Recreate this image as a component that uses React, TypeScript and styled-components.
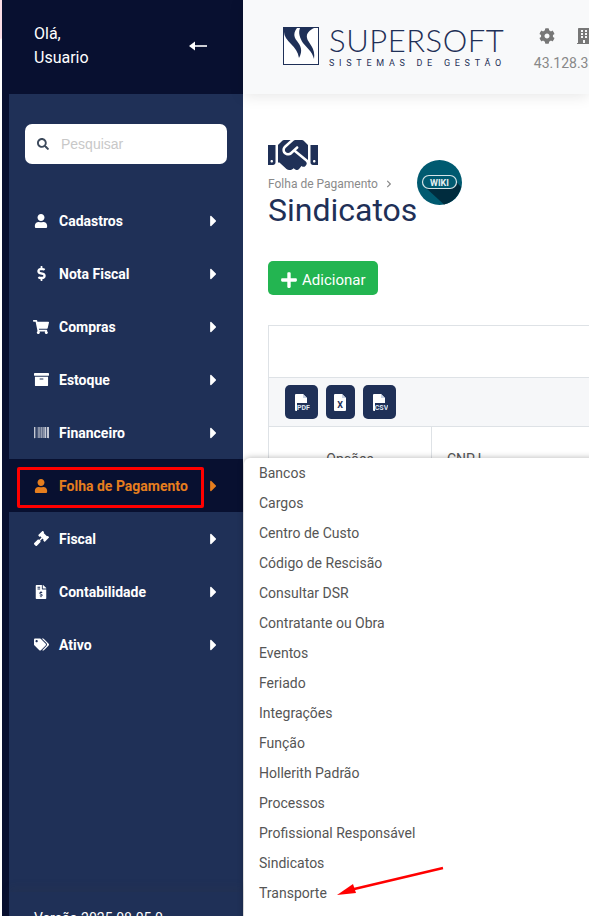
import React from 'react'
import styled, { createGlobalStyle } from 'styled-components'
import {
  FaArchive, FaBarcode, FaBuilding, FaCaretRight, FaChevronRight, FaCog, FaDollarSign,
  FaFileInvoiceDollar, FaGavel, FaHandshake, FaPlus, FaSearch,
  FaShoppingCart, FaTags, FaUser,
} from 'react-icons/fa'

const NAVY = '#1f3057'
const DARK = '#081030'
const ORANGE = '#e67e1e'

const GlobalStyle = createGlobalStyle`
  html, body {
    margin: 0;
    padding: 0;
    background: #ffffff;
    font-family: Roboto, "Liberation Sans", sans-serif;
  }
  * {
    box-sizing: border-box;
  }
`

const Page = styled.div`
  position: relative;
  display: flex;
  width: 589px;
  height: 916px;
  overflow: hidden;
`

const Edge = styled.div`
  flex: none;
  width: 2px;
  background: linear-gradient(#fbdde6 0, #fbdde6 38px, #ffffff 40px);
`

const Sidebar = styled.aside`
  flex: none;
  display: flex;
  flex-direction: column;
  width: 241px;
  height: 916px;
  background: ${DARK};
`

const UserBar = styled.div`
  flex: none;
  display: flex;
  align-items: center;
  justify-content: space-between;
  height: 94px;
  padding: 0 36px 2px 32px;
  color: #ffffff;
  font-size: 16px;
  line-height: 24px;
`

const Panel = styled.div`
  flex: 1;
  display: flex;
  flex-direction: column;
  margin-left: 7px;
  background: ${NAVY};
`

const SearchBox = styled.label`
  display: flex;
  align-items: center;
  gap: 12px;
  height: 40px;
  margin: 30px 16px 30px;
  padding-left: 12px;
  border-radius: 7px;
  background: #ffffff;
  color: #3d4a5c;
`

const SearchInput = styled.input`
  width: 130px;
  border: 0;
  outline: 0;
  padding: 0;
  background: transparent;
  font-family: "Liberation Sans", sans-serif;
  font-size: 14px;

  &::placeholder {
    color: #c8c8c8;
    opacity: 1;
  }
`

const Nav = styled.nav`
  flex: 1;
`

const NavRow = styled.div<{ $active?: boolean }>`
  position: relative;
  display: flex;
  align-items: center;
  height: 53px;
  padding-left: 24px;
  background: ${p => (p.$active ? DARK : 'transparent')};
  color: ${p => (p.$active ? ORANGE : '#ffffff')};
  font-size: 14px;
  font-weight: 700;
`

const NavIcon = styled.span`
  flex: none;
  display: flex;
  justify-content: center;
  width: 16px;
  margin-right: 10px;
`

const NavLabel = styled.span`
  flex: 1;
`

const NavCaret = styled.span`
  flex: none;
  display: flex;
  width: 9px;
  margin-right: 25px;
`

const Highlight = styled.span`
  position: absolute;
  left: 8px;
  top: 8px;
  width: 187px;
  height: 41px;
  border: 3px solid #ff0000;
  border-radius: 2px;
`

const Version = styled.div`
  flex: none;
  height: 24px;
  padding: 18px 0 0 25px;
  overflow: hidden;
  color: #ffffff;
  font-size: 14px;
  line-height: 16px;
  white-space: nowrap;
  box-shadow: 0 -5px 8px rgba(60, 60, 60, 0.12);
`

const Main = styled.main`
  flex: 1;
  min-width: 0;
  display: flex;
  flex-direction: column;
`

const TopBar = styled.header`
  flex: none;
  display: flex;
  align-items: flex-start;
  height: 94px;
  padding: 27px 0 0 40px;
  background: #f8f9fa;
  box-shadow: 0 2px 14px rgba(0, 0, 0, 0.1);
  white-space: nowrap;
`

const Logo = styled.div`
  display: flex;
  gap: 10px;
`

const Brand = styled.div`
  display: flex;
  flex-direction: column;
  color: ${NAVY};
`

const BrandName = styled.span`
  font-family: Lato, sans-serif;
  font-size: 31px;
  font-weight: 300;
  line-height: 27px;
  letter-spacing: 0.55px;
`

const BrandTag = styled.span`
  margin-top: 4px;
  font-size: 9px;
  line-height: 10px;
  letter-spacing: 4.72px;
`

const Tools = styled.div`
  display: flex;
  flex-direction: column;
  margin: -2px 0 0 28px;
  color: #888888;
`

const ToolIcons = styled.div`
  display: flex;
  gap: 21px;
  height: 21px;
  padding-left: 5px;
  align-items: center;
  color: #777777;
`

const HostText = styled.span`
  margin-top: 9px;
  font-size: 14px;
  line-height: 16px;
`

const Content = styled.section`
  flex: 1;
  padding: 46px 0 0 25px;
`

const PageIcon = styled.div`
  display: flex;
  height: 30px;
  overflow: hidden;
  align-items: center;
  color: ${NAVY};
`

const TitleRow = styled.div`
  display: flex;
  align-items: flex-start;
  margin-top: -10px;
`

const TitleBlock = styled.div`
  padding-top: 18px;
`

const Crumb = styled.div`
  display: flex;
  align-items: center;
  gap: 7px;
  color: #8a8a8a;
  font-size: 12px;
  line-height: 12px;
`

const Title = styled.h1`
  margin: 1px 0 0;
  color: ${NAVY};
  font-size: 32px;
  font-weight: 400;
  line-height: 38px;
`

const WikiBadge = styled.svg`
  flex: none;
  display: block;
`

const AddButton = styled.button`
  display: flex;
  align-items: center;
  gap: 4px;
  width: 110px;
  height: 34px;
  margin-top: 32px;
  padding: 3px 0 0 12px;
  border: 0;
  border-radius: 5px;
  background: #23b551;
  color: #ffffff;
  font-family: Roboto, sans-serif;
  font-size: 15px;
`

const TableShell = styled.div`
  width: 400px;
  margin-top: 30px;
  border-left: 1px solid #dee2e6;
  border-top: 1px solid #dee2e6;
`

const TableHead = styled.div`
  height: 52px;
  border-bottom: 1px solid #dee2e6;
`

const ExportBar = styled.div`
  display: flex;
  gap: 8px;
  height: 49px;
  padding: 7px 0 0 16px;
  background: #f6f7f9;
  border-bottom: 1px solid #dee2e6;
`

const ExportButton = styled.button<{ $wide?: boolean }>`
  display: flex;
  align-items: center;
  justify-content: center;
  width: ${p => (p.$wide ? 33 : 29)}px;
  height: 34px;
  padding: 0;
  border: 0;
  border-radius: 5px;
  background: ${NAVY};
`

const Columns = styled.div`
  display: flex;
  height: 60px;
  color: #555555;
  font-size: 14px;
`

const ColumnCell = styled.div<{ $first?: boolean }>`
  width: ${p => (p.$first ? '163px' : 'auto')};
  padding: 24px 0 0 ${p => (p.$first ? '0' : '15px')};
  text-align: ${p => (p.$first ? 'center' : 'left')};
  border-right: ${p => (p.$first ? '1px solid #dee2e6' : '0')};
`

const SubMenu = styled.ul`
  position: absolute;
  left: 244px;
  top: 458px;
  width: 380px;
  height: 480px;
  margin: 0;
  padding: 0;
  list-style: none;
  background: #ffffff;
  border-radius: 6px 0 0 0;
  box-shadow: 0 0 6px rgba(0, 0, 0, 0.3);
`

const SubItem = styled.li`
  height: 30px;
  padding-left: 15px;
  color: #555555;
  font-size: 14px;
  line-height: 30px;
`

const ArrowMark = styled.svg`
  position: absolute;
  left: 330px;
  top: 860px;
`

const menu = [
  { label: 'Cadastros', icon: <FaUser size={14} /> },
  { label: 'Nota Fiscal', icon: <FaDollarSign size={15} /> },
  { label: 'Compras', icon: <FaShoppingCart size={16} /> },
  { label: 'Estoque', icon: <FaArchive size={15} /> },
  { label: 'Financeiro', icon: <FaBarcode size={15} /> },
  { label: 'Folha de Pagamento', icon: <FaUser size={14} />, active: true },
  { label: 'Fiscal', icon: <FaGavel size={15} /> },
  { label: 'Contabilidade', icon: <FaFileInvoiceDollar size={14} /> },
  { label: 'Ativo', icon: <FaTags size={15} /> },
]

const subItems = [
  'Bancos', 'Cargos', 'Centro de Custo', 'Código de Rescisão', 'Consultar DSR',
  'Contratante ou Obra', 'Eventos', 'Feriado', 'Integrações', 'Função',
  'Hollerith Padrão', 'Processos', 'Profissional Responsável', 'Sindicatos', 'Transporte',
]

const FileGlyph: React.FC<{ label: string }> = ({ label }) => {
  const boxed = label.length > 1
  return (
    <svg width="17" height="17" viewBox="0 0 17 17">
      <path d="M3 0h7l4 4v12a1 1 0 0 1-1 1H3a1 1 0 0 1-1-1V1a1 1 0 0 1 1-1z" fill="#ffffff" />
      <path d="M10 0l4 4h-4z" fill="#c9d3e6" />
      {boxed && <rect x="4" y="9" width="13" height="8" fill={NAVY} />}
      <text
        x={boxed ? 10.5 : 8}
        y={boxed ? 15.5 : 14}
        textAnchor="middle"
        fontFamily="Roboto, sans-serif"
        fontSize={boxed ? 7 : 9}
        fontWeight="700"
        fill={boxed ? '#dfe6f3' : NAVY}
      >
        {label}
      </text>
    </svg>
  )
}

const LogoMark = () => (
  <svg width="36" height="38" viewBox="0 0 36 38">
    <rect x="0.5" y="0.5" width="35" height="37" fill="#ffffff" stroke={NAVY} />
    <path d="M1 1h13c-3 4-4 8 0 13 4 5 6 10 2 17-1-6-4-10-8-14C4 13 1 9 1 5z" fill={NAVY} />
    <path d="M17 1h14c-4 2-8 5-7 10 1 5 9 10 7 21-2-8-7-11-11-16-3-5-5-10-3-15z" fill={NAVY} />
  </svg>
)

const BackArrow = () => (
  <svg width="18" height="10" viewBox="0 0 18 10">
    <path d="M5 4.2h13v1.6H5z" fill="#ffffff" />
    <path d="M0 5l6-4.5v9z" fill="#ffffff" />
  </svg>
)

const App: React.FC = () => (
  <Page>
    <GlobalStyle />
    <Edge />
    <Sidebar>
      <UserBar>
        <div>Olá,<br />Usuario</div>
        <BackArrow />
      </UserBar>
      <Panel>
        <SearchBox>
          <FaSearch size={12} />
          <SearchInput placeholder="Pesquisar" />
        </SearchBox>
        <Nav>
          {menu.map(item => (
            <NavRow key={item.label} $active={item.active}>
              <NavIcon>{item.icon}</NavIcon>
              <NavLabel>{item.label}</NavLabel>
              <NavCaret><FaCaretRight size={18} /></NavCaret>
              {item.active && <Highlight />}
            </NavRow>
          ))}
        </Nav>
        <Version>Versão 2025.08.05.0</Version>
      </Panel>
    </Sidebar>
    <Main>
      <TopBar>
        <Logo>
          <LogoMark />
          <Brand>
            <BrandName>SUPERSOFT</BrandName>
            <BrandTag>SISTEMAS DE GESTÃO</BrandTag>
          </Brand>
        </Logo>
        <Tools>
          <ToolIcons>
            <FaCog size={16} />
            <FaBuilding size={16} />
          </ToolIcons>
          <HostText>43.128.33.10</HostText>
        </Tools>
      </TopBar>
      <Content>
        <PageIcon><FaHandshake size={50} /></PageIcon>
        <TitleRow>
          <TitleBlock>
            <Crumb>Folha de Pagamento <FaChevronRight size={8} /></Crumb>
            <Title>Sindicatos</Title>
          </TitleBlock>
          <WikiBadge width="45" height="45" viewBox="0 0 45 45">
            <circle cx="22.5" cy="22.5" r="22.5" fill="#005a70" />
            <path d="M9 28l26-11 9 10a22.5 22.5 0 0 1-17 17.5z" fill="#002c3e" />
            <rect x="5.5" y="15.5" width="34" height="13" rx="6.5" fill="#005a70" stroke="#d6e4e8" strokeWidth="1.2" />
            <text x="22.5" y="25.5" textAnchor="middle" fontFamily="Roboto, sans-serif" fontSize="9" fontWeight="700" fill="#e8f0f2">WIKI</text>
          </WikiBadge>
        </TitleRow>
        <AddButton><FaPlus size={18} /> Adicionar</AddButton>
        <TableShell>
          <TableHead />
          <ExportBar>
            <ExportButton $wide><FileGlyph label="PDF" /></ExportButton>
            <ExportButton><FileGlyph label="X" /></ExportButton>
            <ExportButton $wide><FileGlyph label="CSV" /></ExportButton>
          </ExportBar>
          <Columns>
            <ColumnCell $first>Opções</ColumnCell>
            <ColumnCell>CNPJ</ColumnCell>
          </Columns>
        </TableShell>
      </Content>
    </Main>
    <SubMenu>
      {subItems.map(name => <SubItem key={name}>{name}</SubItem>)}
    </SubMenu>
    <ArrowMark width="116" height="40" viewBox="0 0 116 40">
      <path d="M113 8L20 30" stroke="#ff0000" strokeWidth="2.4" fill="none" />
      <path d="M7 35l16-11 3 9z" fill="#ff0000" />
    </ArrowMark>
  </Page>
)

export default App
